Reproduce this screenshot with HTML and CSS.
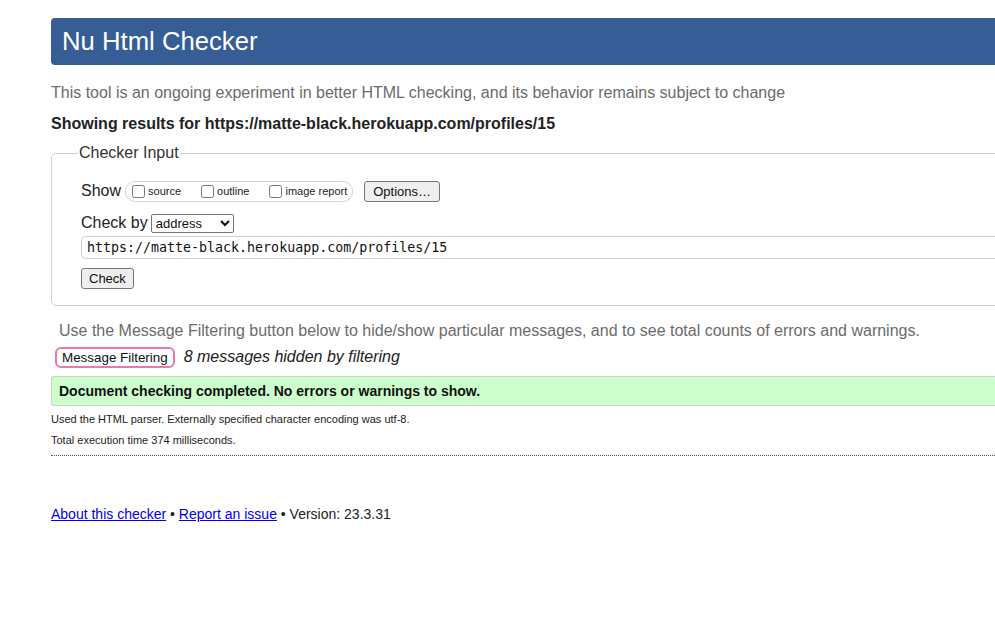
FILE: index.html
```html
<!DOCTYPE html>
<html>
<head>
<meta charset="utf-8">
<title>Nu Html Checker</title>
<link rel="stylesheet" href="styles.css">
</head>
<body>
<div class="page">
  <h1 class="title">Nu Html Checker</h1>
  <p class="intro">This tool is an ongoing experiment in better HTML checking, and its behavior remains subject to change</p>
  <p class="showing">Showing results for https://matte-black.herokuapp.com/profiles/15</p>
  <fieldset class="checker">
    <legend class="legend">Checker Input</legend>
    <div class="row show-row">
      <span class="label">Show</span>
      <span class="pill">
        <label class="opt"><input type="checkbox" class="cb">source</label>
        <label class="opt"><input type="checkbox" class="cb">outline</label>
        <label class="opt last"><input type="checkbox" class="cb">image report</label>
      </span>
      <button class="btn options">Options…</button>
    </div>
    <div class="row by-row">
      <span class="label">Check by</span>
      <select class="sel"><option>address</option></select>
    </div>
    <div class="url">https://matte-black.herokuapp.com/profiles/15</div>
    <button class="btn check">Check</button>
  </fieldset>
  <p class="filter-note">Use the Message Filtering button below to hide/show particular messages, and to see total counts of errors and warnings.</p>
  <div class="filter-row">
    <button class="btn mf">Message Filtering</button>
    <span class="hidden-note">8 messages hidden by filtering</span>
  </div>
  <div class="success">Document checking completed. No errors or warnings to show.</div>
  <p class="small first">Used the HTML parser. Externally specified character encoding was utf-8.</p>
  <p class="small">Total execution time 374 milliseconds.</p>
  <hr class="dots">
  <p class="footer"><a href="#">About this checker</a> • <a href="#">Report an issue</a> • Version: 23.3.31</p>
</div>
</body>
</html>
```

FILE: styles.css
```css
html, body {
  margin: 0;
  padding: 0;
  overflow: hidden;
  background: #fff;
}
body {
  font-family: "Liberation Sans", Arial, sans-serif;
  color: #222;
}
.page {
  width: 1100px;
  padding: 18px 0 0 51px;
}
.title {
  margin: 0;
  height: 47px;
  box-sizing: border-box;
  background: #365d95;
  color: #fff;
  font-weight: normal;
  font-size: 25.7px;
  line-height: 47px;
  padding-left: 11px;
  border-radius: 4px 0 0 4px;
}
.intro {
  margin: 18px 0 0;
  font-size: 16px;
  line-height: 20px;
  color: #6b6b6b;
}
.showing {
  margin: 11px 0 0;
  font-size: 16px;
  line-height: 20px;
  font-weight: bold;
  color: #222;
}
.checker {
  margin: 10px 0 0;
  border: 1px solid #cfcfcf;
  border-radius: 5px;
  padding: 18px 0 16px 29px;
  min-width: 0;
}
.legend {
  font-size: 16px;
  padding: 0 1px;
  margin-left: -3px;
  color: #333;
}
.row {
  display: flex;
  align-items: center;
}
.label {
  font-size: 16px;
  color: #222;
}
.show-row {
  height: 22px;
}
.pill {
  display: flex;
  align-items: center;
  margin-left: 4px;
  height: 19px;
  border: 1px solid #d4d4d4;
  border-radius: 10px;
  padding: 0 5px 0 6px;
  font-size: 11px;
}
.opt {
  display: flex;
  align-items: center;
  margin-right: 20px;
  color: #222;
}
.opt.last {
  margin-right: 0;
}
.cb {
  margin: 0 3px 0 0;
  width: 13px;
  height: 13px;
}
.btn {
  font-family: "Liberation Sans", Arial, sans-serif;
  background: #efefef;
  border: 1px solid #767676;
  border-radius: 3px;
  color: #111;
  padding: 0 6px;
}
.options {
  margin-left: 11px;
  height: 21px;
  font-size: 13px;
  padding: 0 8px;
}
.by-row {
  margin-top: 11px;
  height: 20px;
}
.sel {
  margin-left: 3px;
  width: 83px;
  height: 19px;
  font-family: "Liberation Sans", Arial, sans-serif;
  font-size: 13px;
  border: 1px solid #767676;
  border-radius: 2px;
  background: #fff;
  color: #111;
}
.url {
  margin-top: 3px;
  height: 23px;
  box-sizing: border-box;
  border: 1px solid #d0d0d0;
  border-right: none;
  border-radius: 5px 0 0 5px;
  font-family: "DejaVu Sans Mono", monospace;
  font-size: 13.3px;
  line-height: 21px;
  padding-left: 5px;
  color: #111;
}
.check {
  margin-top: 9px;
  height: 21px;
  font-size: 13px;
  padding: 0 7px;
}
.filter-note {
  margin: 15px 0 0 8px;
  font-size: 16px;
  line-height: 20px;
  color: #6b6b6b;
}
.filter-row {
  display: flex;
  align-items: center;
  margin: 5px 0 0 4px;
  height: 22px;
}
.mf {
  background: #fff;
  border: 2px solid #e67ab0;
  border-radius: 6px;
  height: 21px;
  font-size: 13.4px;
  padding: 0 5px;
}
.hidden-note {
  margin-left: 9px;
  font-size: 16px;
  font-style: italic;
  color: #222;
}
.success {
  margin-top: 8px;
  height: 30px;
  box-sizing: border-box;
  background: #ccffcc;
  border: 1px solid #cfcfcf;
  border-right: none;
  border-radius: 3px 0 0 3px;
  padding-left: 7px;
  font-size: 14px;
  font-weight: bold;
  line-height: 28px;
  color: #111;
}
.small {
  margin: 7px 0 0;
  font-size: 11px;
  line-height: 14px;
  color: #222;
}
.small.first {
  margin-top: 6px;
}
.dots {
  margin: 8px 0 0;
  border: 0;
  border-top: 1px dotted #555;
  height: 0;
}
.footer {
  margin: 50px 0 0;
  font-size: 14px;
  line-height: 16px;
  color: #222;
}
.footer a {
  color: #0000ee;
}
```
